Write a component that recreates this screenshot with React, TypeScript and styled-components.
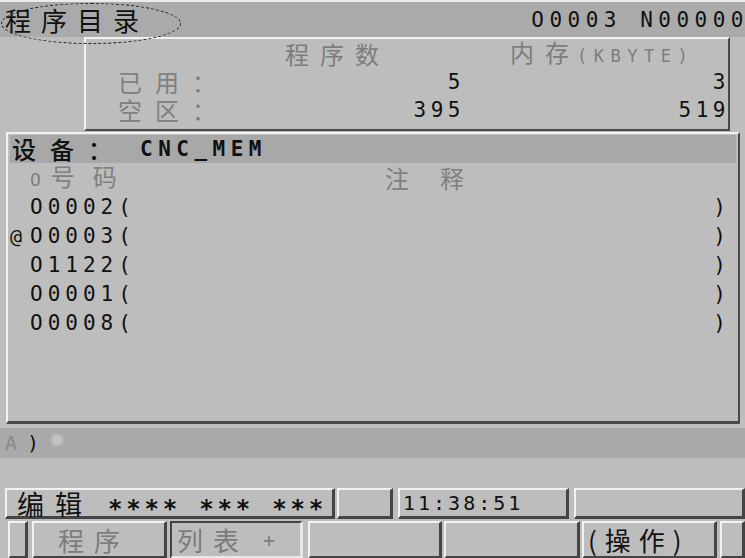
import styled, { createGlobalStyle } from 'styled-components';

const cjk = `'Noto Sans CJK SC', 'Noto Sans', sans-serif`;
const mono = `'DejaVu Sans Mono', 'Liberation Mono', monospace`;

const GlobalStyle = createGlobalStyle`
  html, body {
    margin: 0;
    padding: 0;
    background: #bdbdbd;
  }
  body {
    font-family: ${cjk};
  }
`;

const Screen = styled.div`
  width: 745px;
  height: 558px;
  overflow: hidden;
  background: #bdbdbd;
  color: #111;
  display: flex;
  flex-direction: column;
`;

const TitleBar = styled.header`
  flex-shrink: 0;
  height: 35px;
  border-top: 2px solid #ececec;
  background: #aaaaaa;
  display: flex;
  align-items: center;
  position: relative;
  z-index: 2;
`;

const Title = styled.div`
  position: relative;
  padding-left: 5px;
  font-family: ${cjk};
  font-size: 26px;
  letter-spacing: 10px;
  line-height: 35px;
  color: #111;
`;

const TitleRing = styled.span`
  position: absolute;
  left: 1px;
  top: 1px;
  width: 178px;
  height: 39px;
  border: 1.5px dashed #222;
  border-radius: 50%;
  pointer-events: none;
`;

const ProgNo = styled.div`
  margin-left: auto;
  margin-right: -4px;
  white-space: nowrap;
  font-family: ${mono};
  font-size: 21px;
  letter-spacing: 5.5px;
  color: #111;
`;

const InfoRow = styled.section`
  flex-shrink: 0;
  height: 94px;
  padding: 0 15px 0 84px;
  display: flex;
`;

const InfoPanel = styled.div`
  flex: 1;
  border-top: 2px solid #f2f2f2;
  border-left: 2px solid #f2f2f2;
  border-bottom: 2px solid #4a4a4a;
  border-right: 2px solid #4a4a4a;
  padding: 1px 0 0 32px;
  display: grid;
  grid-template-columns: 132px 213px 1fr;
  grid-template-rows: 28px 28px 28px;
  align-items: center;
`;

const HeadCell = styled.div<{ $pad: number }>`
  padding-left: ${(p) => p.$pad}px;
  font-family: ${cjk};
  font-size: 24px;
  line-height: 28px;
  letter-spacing: 11px;
  color: #7d7d7d;
  white-space: nowrap;
`;

const Unit = styled.span`
  font-family: ${mono};
  font-size: 17px;
  letter-spacing: 6.5px;
  margin-left: -3px;
`;

const InfoLabel = styled.div`
  font-family: ${cjk};
  font-size: 24px;
  letter-spacing: 13px;
  color: #808080;
  line-height: 26px;
`;

const InfoValue = styled.div<{ $right: number }>`
  justify-self: end;
  margin-right: ${(p) => p.$right}px;
  font-family: ${mono};
  font-size: 21px;
  line-height: 26px;
  letter-spacing: 4.5px;
  color: #111;
`;

const ListPanel = styled.section`
  flex-shrink: 0;
  height: 286px;
  margin: 1px 5px 0 6px;
  border-top: 2px solid #f2f2f2;
  border-left: 2px solid #f2f2f2;
  border-bottom: 3px solid #4a4a4a;
  border-right: 2px solid #4a4a4a;
  padding: 1px 2px 0 2px;
  display: flex;
  flex-direction: column;
`;

const DeviceRow = styled.div`
  height: 28px;
  background: #a8a8a8;
  display: flex;
  align-items: center;
  padding-left: 2px;
`;

const DeviceLabel = styled.span`
  width: 128px;
  font-family: ${cjk};
  font-size: 24px;
  line-height: 28px;
  font-weight: 500;
  letter-spacing: 14px;
  color: #111;
`;

const DeviceName = styled.span`
  font-family: ${mono};
  font-size: 21px;
  font-weight: bold;
  letter-spacing: 5.5px;
  color: #111;
`;

const Row = styled.div`
  height: 29px;
  display: flex;
  align-items: center;
  padding-right: 10px;
`;

const Marker = styled.span`
  width: 20px;
  font-family: ${mono};
  font-size: 20px;
  color: #111;
`;

const NumCol = styled.span`
  width: 355px;
  font-family: ${mono};
  font-size: 21px;
  line-height: 28px;
  letter-spacing: 5px;
  color: #111;
  white-space: nowrap;
`;

const HeadNum = styled(NumCol)`
  color: #808080;
`;

const HeadLetter = styled.span`
  font-family: ${mono};
  font-size: 18px;
  margin-right: 5px;
`;

const HeadText = styled.span<{ $gap: number }>`
  font-family: ${cjk};
  font-size: 24px;
  line-height: 28px;
  letter-spacing: ${(p) => p.$gap}px;
  color: #808080;
`;

const Close = styled.span`
  margin-left: auto;
  font-family: ${mono};
  font-size: 21px;
  color: #111;
`;

const CmdRow = styled.div`
  flex-shrink: 0;
  height: 30px;
  margin-top: 4px;
  background: #a9a9a9;
  display: flex;
  align-items: center;
  padding-left: 5px;
  font-family: ${mono};
  font-size: 20px;
`;

const CmdPrompt = styled.span`
  color: #8a8a8a;
  letter-spacing: 10px;
`;

const CmdParen = styled.span`
  color: #111;
`;

const Cursor = styled.span`
  width: 12px;
  height: 12px;
  margin-left: 12px;
  margin-top: -6px;
  border-radius: 50%;
  background: #c2c2c2;
  filter: blur(1px);
`;

const Spacer = styled.div`
  flex-shrink: 0;
  height: 30px;
`;

const StatusBar = styled.div`
  flex-shrink: 0;
  height: 31px;
  display: flex;
  padding-left: 5px;
  gap: 2px;
`;

const Box = styled.div<{ $w?: number; $sunken?: boolean }>`
  box-sizing: border-box;
  ${(p) => (p.$w ? `width: ${p.$w}px; flex-shrink: 0;` : 'flex: 1;')}
  height: 100%;
  background: #bdbdbd;
  border-top: 2px solid ${(p) => (p.$sunken ? '#444' : '#f2f2f2')};
  border-left: 2px solid ${(p) => (p.$sunken ? '#444' : '#f2f2f2')};
  border-bottom: 3px solid ${(p) => (p.$sunken ? '#e8e8e8' : '#444')};
  border-right: 3px solid ${(p) => (p.$sunken ? '#e8e8e8' : '#444')};
  display: flex;
  align-items: center;
  white-space: nowrap;
`;

const Mode = styled.span`
  width: 91px;
  padding-left: 10px;
  font-family: ${cjk};
  font-size: 27px;
  letter-spacing: 11px;
  color: #111;
`;

const Stars = styled.span`
  padding-top: 11px;
  font-family: ${mono};
  font-size: 24px;
  font-weight: bold;
  letter-spacing: 3.8px;
  color: #111;
`;

const Clock = styled.span`
  padding-left: 3px;
  font-family: ${mono};
  font-size: 20px;
  letter-spacing: 3px;
  color: #111;
`;

const SoftKeys = styled.div`
  flex-shrink: 0;
  height: 38px;
  margin-top: 2px;
  display: flex;
  padding-left: 8px;
`;

const KeyLabel = styled.span<{ $pad: number; $muted?: boolean; $gap?: number }>`
  padding-left: ${(p) => p.$pad}px;
  font-family: ${cjk};
  font-size: 26px;
  letter-spacing: ${(p) => p.$gap ?? 10}px;
  color: ${(p) => (p.$muted ? '#7c7c7c' : '#111')};
`;

const Plus = styled.span`
  margin-left: 14px;
  font-family: ${mono};
  font-size: 20px;
  color: #7c7c7c;
`;

const Gap = styled.span<{ $w: number }>`
  width: ${(p) => p.$w}px;
  flex-shrink: 0;
`;

const programs = [
  { no: 'O0002', current: false },
  { no: 'O0003', current: true },
  { no: 'O1122', current: false },
  { no: 'O0001', current: false },
  { no: 'O0008', current: false },
];

export default function App() {
  return (
    <>
      <GlobalStyle />
      <Screen>
        <TitleBar>
          <Title>
            程序目录
            <TitleRing />
          </Title>
          <ProgNo>O0003 N00000</ProgNo>
        </TitleBar>

        <InfoRow>
          <InfoPanel>
            <div />
            <HeadCell $pad={35}>程序数</HeadCell>
            <HeadCell $pad={47}>
              内存<Unit>(KBYTE)</Unit>
            </HeadCell>
            <InfoLabel>已用：</InfoLabel>
            <InfoValue $right={-2}>5</InfoValue>
            <InfoValue $right={-2}>3</InfoValue>
            <InfoLabel>空区：</InfoLabel>
            <InfoValue $right={-2}>395</InfoValue>
            <InfoValue $right={-2}>519</InfoValue>
          </InfoPanel>
        </InfoRow>

        <ListPanel>
          <DeviceRow>
            <DeviceLabel>设备：</DeviceLabel>
            <DeviceName>CNC_MEM</DeviceName>
          </DeviceRow>
          <Row>
            <Marker />
            <HeadNum>
              <HeadLetter>O</HeadLetter>
              <HeadText $gap={18}>号码</HeadText>
            </HeadNum>
            <HeadText $gap={31}>注释</HeadText>
          </Row>
          {programs.map((p) => (
            <Row key={p.no}>
              <Marker>{p.current ? '@' : ''}</Marker>
              <NumCol>{p.no}(</NumCol>
              <Close>)</Close>
            </Row>
          ))}
        </ListPanel>

        <CmdRow>
          <CmdPrompt>A</CmdPrompt>
          <CmdParen>)</CmdParen>
          <Cursor />
        </CmdRow>

        <Spacer />

        <StatusBar>
          <Box $w={330}>
            <Mode>编辑</Mode>
            <Stars>**** *** ***</Stars>
          </Box>
          <Box $w={56} />
          <Gap $w={1} />
          <Box $w={171}>
            <Clock>11:38:51</Clock>
          </Box>
          <Gap $w={1} />
          <Box />
        </StatusBar>

        <SoftKeys>
          <Box $w={20} />
          <Gap $w={4} />
          <Box $w={135}>
            <KeyLabel $pad={24} $muted>程序</KeyLabel>
          </Box>
          <Gap $w={3} />
          <Box $w={133} $sunken>
            <KeyLabel $pad={5} $muted>列表</KeyLabel>
            <Plus>+</Plus>
          </Box>
          <Gap $w={5} />
          <Box $w={134} />
          <Gap $w={2} />
          <Box $w={136} />
          <Gap $w={2} />
          <Box $w={135}>
            <KeyLabel $pad={4} $gap={8}>(操作)</KeyLabel>
          </Box>
          <Gap $w={3} />
          <Box />
        </SoftKeys>
      </Screen>
    </>
  );
}
